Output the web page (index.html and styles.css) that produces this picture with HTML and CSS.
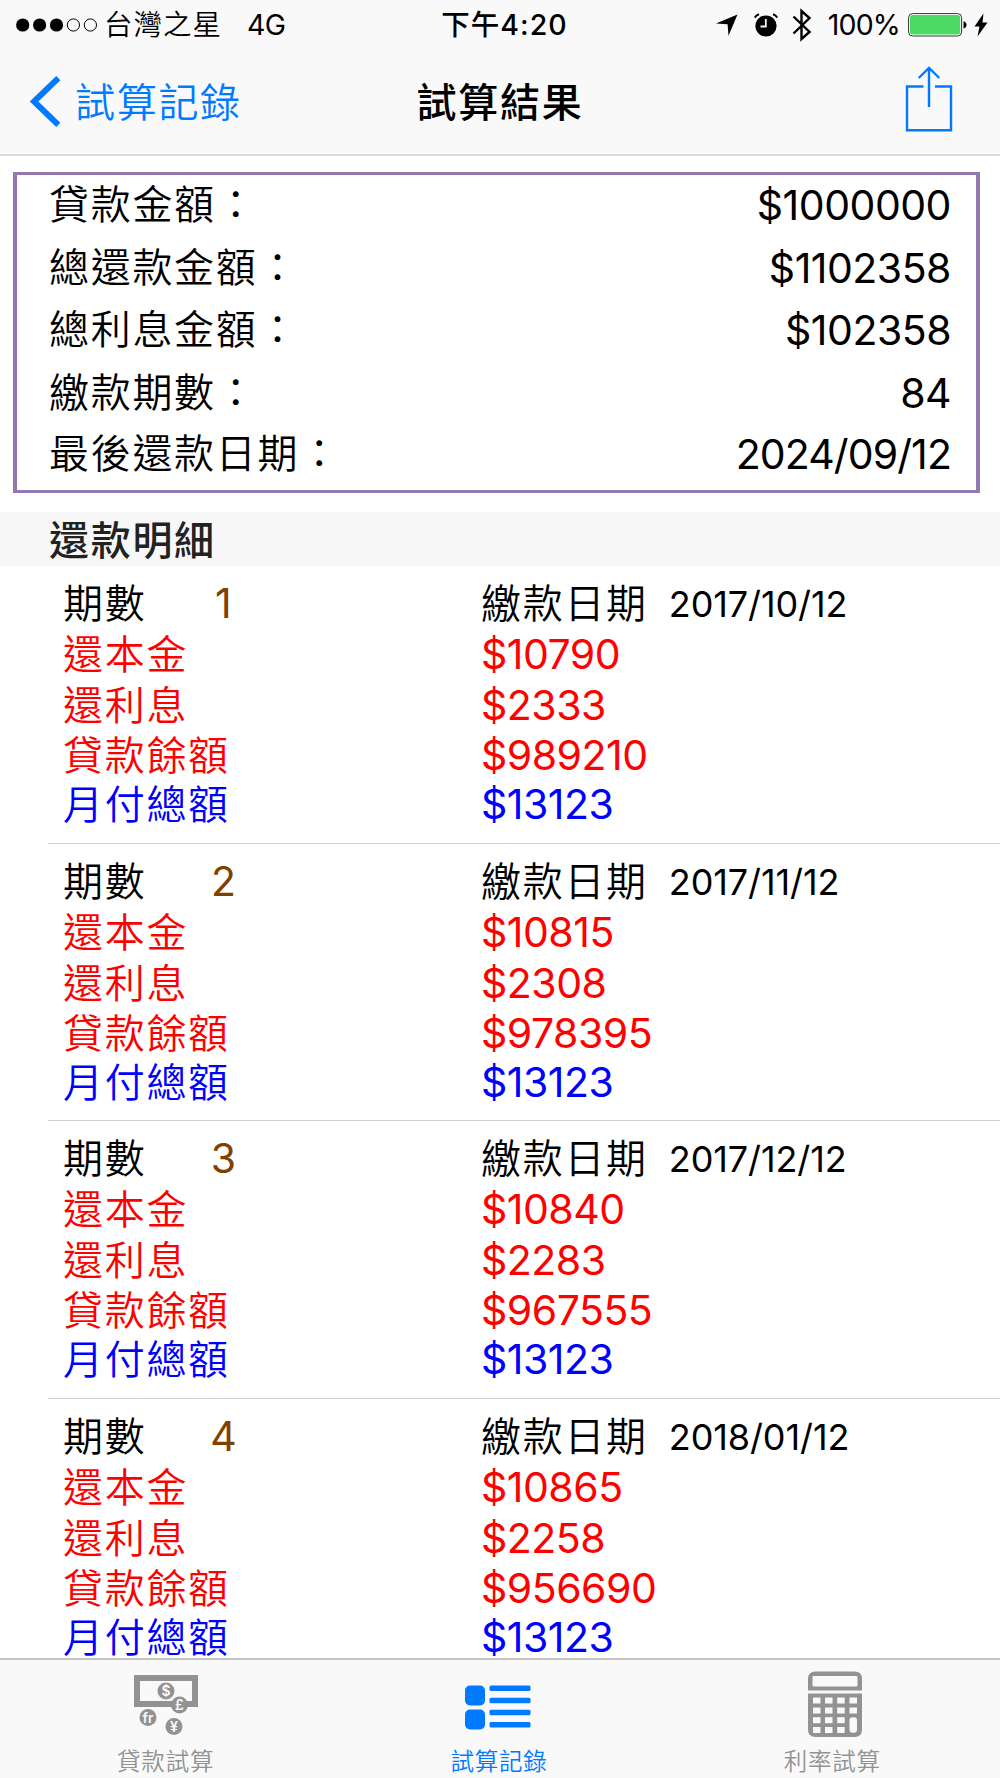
FILE: index.html
```html
<!DOCTYPE html>
<html lang="zh-Hant">
<head>
    <meta charset="UTF-8">
    <meta name="viewport" content="width=device-width, initial-scale=1.0">
    <title>試算結果</title>
    <link rel="stylesheet" href="styles.css">
</head>
<body>
    <header class="top">
        <div class="status">
            <div class="status-left">
                <svg class="signal" width="82" height="14" viewBox="0 0 82 14">
                    <circle cx="6.7" cy="7" r="6.6"/>
                    <circle cx="23.6" cy="7" r="6.6"/>
                    <circle cx="40.5" cy="7" r="6.6"/>
                    <circle class="empty" cx="57.4" cy="7" r="6.1"/>
                    <circle class="empty" cx="74.4" cy="7" r="6.1"/>
                </svg>
                <span class="carrier">台灣之星</span>
                <span class="network">4G</span>
            </div>
            <div class="time">下午4:20</div>
            <div class="status-right">
                <svg class="location" width="22" height="22" viewBox="0 0 22 22"><path d="M21.5 .5 0 9.6l11.6.6.9 11.6z"/></svg>
                <svg class="alarm" width="24" height="24" viewBox="0 0 24 24">
                    <circle cx="12" cy="13" r="10.6"/>
                    <path d="M.8 4.6A7 7 0 0 1 5 1.2M23.2 4.6A7 7 0 0 0 19 1.2" fill="none" stroke="#000" stroke-width="2"/>
                    <path d="M11.8 6v7.5H6.5" fill="none" stroke="#f9f9f9" stroke-width="1.8"/>
                </svg>
                <svg class="bluetooth" width="20" height="34" viewBox="0 0 20 34"><path d="M1.500 8.500 17.500 24 9.500 31V3l8 7L1.500 25.500"/></svg>
                <span class="percent">100%</span>
                <svg class="battery" width="60" height="24" viewBox="0 0 60 24">
                    <rect x=".6" y=".6" width="53" height="22.4" rx="4" fill="#fff" stroke="#333" stroke-width="1"/>
                    <rect x="2" y="2" width="50.2" height="19.6" rx="2.5" fill="#4cd964"/>
                    <path d="M55.5 8.2q3 1 3 3.7t-3 3.7z"/>
                </svg>
                <svg class="bolt" width="14" height="24" viewBox="0 0 14 24"><path d="M9.5.5.5 13.5h5L3.5 23.5 13.5 9.5h-5z"/></svg>
            </div>
        </div>
        <nav class="nav">
            <a class="back">
                <svg width="31" height="51" viewBox="0 0 31 51"><path d="M28.3 2.2 4 25.5 28.3 48.8"/></svg>
                <span>試算記錄</span>
            </a>
            <h1>試算結果</h1>
            <a class="share">
                <svg width="48" height="67" viewBox="0 0 48 67">
                    <path d="M18.5 20.5H2v43.8h44V20.5H30"/>
                    <path d="M24 41V2M13.7 12 24 2l10.3 10"/>
                </svg>
            </a>
        </nav>
    </header>

    <main>
        <dl class="summary">
            <dt>貸款金額：</dt><dd>$1000000</dd>
            <dt>總還款金額：</dt><dd>$1102358</dd>
            <dt>總利息金額：</dt><dd>$102358</dd>
            <dt>繳款期數：</dt><dd>84</dd>
            <dt>最後還款日期：</dt><dd class="last-date">2024/09/12</dd>
        </dl>

        <h2>還款明細</h2>

        <ul class="periods">
            <li>
                <div class="term">期數<span class="no">1</span></div>
                <div class="due">繳款日期<span class="date">2017/10/12</span></div>
                <div class="red">還本金</div><div class="red amount">$10790</div>
                <div class="red">還利息</div><div class="red amount">$2333</div>
                <div class="red">貸款餘額</div><div class="red amount">$989210</div>
                <div class="blue">月付總額</div><div class="blue amount">$13123</div>
            </li>
            <li>
                <div class="term">期數<span class="no">2</span></div>
                <div class="due">繳款日期<span class="date">2017/11/12</span></div>
                <div class="red">還本金</div><div class="red amount">$10815</div>
                <div class="red">還利息</div><div class="red amount">$2308</div>
                <div class="red">貸款餘額</div><div class="red amount">$978395</div>
                <div class="blue">月付總額</div><div class="blue amount">$13123</div>
            </li>
            <li>
                <div class="term">期數<span class="no">3</span></div>
                <div class="due">繳款日期<span class="date">2017/12/12</span></div>
                <div class="red">還本金</div><div class="red amount">$10840</div>
                <div class="red">還利息</div><div class="red amount">$2283</div>
                <div class="red">貸款餘額</div><div class="red amount">$967555</div>
                <div class="blue">月付總額</div><div class="blue amount">$13123</div>
            </li>
            <li>
                <div class="term">期數<span class="no">4</span></div>
                <div class="due">繳款日期<span class="date">2018/01/12</span></div>
                <div class="red">還本金</div><div class="red amount">$10865</div>
                <div class="red">還利息</div><div class="red amount">$2258</div>
                <div class="red">貸款餘額</div><div class="red amount">$956690</div>
                <div class="blue">月付總額</div><div class="blue amount">$13123</div>
            </li>
        </ul>
    </main>

    <footer class="tabs">
        <a class="tab">
            <svg width="66" height="68" viewBox="0 0 66 68">
                <rect x="4" y="8" width="58" height="26" fill="none" stroke="#929292" stroke-width="6"/>
                <circle cx="33" cy="21" r="8.5"/>
                <circle cx="46.5" cy="35" r="8.5"/>
                <circle cx="15" cy="47.5" r="8.5"/>
                <circle cx="41" cy="56.5" r="8.5"/>
                <g class="coin">
                    <text x="33" y="26">$</text>
                    <text x="46.5" y="40">£</text>
                    <text x="15" y="52.5">fr</text>
                    <text x="41" y="61.5">¥</text>
                </g>
            </svg>
            <span>貸款試算</span>
        </a>
        <a class="tab active">
            <svg width="66" height="68" viewBox="0 0 66 68">
                <rect x="0" y="15.5" width="20" height="20" rx="5"/>
                <rect x="0" y="39.5" width="20" height="20" rx="5"/>
                <rect x="24.5" y="15.5" width="41" height="5.5" rx="1.5"/>
                <rect x="24.5" y="27.7" width="41" height="5.5" rx="1.5"/>
                <rect x="24.5" y="39.8" width="41" height="5.5" rx="1.5"/>
                <rect x="24.5" y="52" width="41" height="5.5" rx="1.5"/>
            </svg>
            <span>試算記錄</span>
        </a>
        <a class="tab calculator">
            <svg width="54" height="68" viewBox="0 0 54 68">
                <path d="M0 20.5V9q0-7.5 7.5-7.5h39q7.5 0 7.5 7.5v11.5z"/>
                <path d="M0 23.5h54v36q0 7.5-7.500 7.500h-39Q0 67 0 59.500z"/>
                <g fill="#f9f9f9">
                    <rect x="4.5" y="6" width="45" height="10.5" rx="1"/>
                    <rect x="5" y="27.5" width="7.5" height="6"/><rect x="17" y="27.5" width="7.5" height="6"/><rect x="29.2" y="27.5" width="7.5" height="6"/><rect x="41.5" y="27.5" width="7.5" height="6"/>
                    <rect x="5" y="37.5" width="7.5" height="6"/><rect x="17" y="37.5" width="7.5" height="6"/><rect x="29.2" y="37.5" width="7.5" height="6"/><rect x="41.5" y="37.5" width="7.5" height="6"/>
                    <rect x="5" y="47.2" width="7.5" height="6"/><rect x="17" y="47.2" width="7.5" height="6"/><rect x="29.2" y="47.2" width="7.5" height="6"/>
                    <rect x="5" y="57" width="7.5" height="6"/><rect x="17" y="57" width="7.5" height="6"/><rect x="29.2" y="57" width="7.5" height="6"/>
                    <rect x="41.5" y="47.2" width="7.5" height="15.5" rx="3"/>
                </g>
            </svg>
            <span>利率試算</span>
        </a>
    </footer>
</body>
</html>
```
FILE: styles.css
```css
* {
    box-sizing: border-box;
    margin: 0;
    padding: 0;
}

body {
    display: flex;
    flex-direction: column;
    height: 1778px;
    overflow: hidden;
    background: #fff;
    color: #000;
    font-family: Inter, "Noto Sans CJK TC", sans-serif;
    font-size: 40px;
    font-weight: 350;
    letter-spacing: 1.7px;
    white-space: nowrap;
}

/* Barra superior */
.top {
    height: 156px;
    background: #f9f9f9;
    border-bottom: 2px solid #dbdbdb;
}

.status {
    display: grid;
    grid-template-columns: 1fr auto 1fr;
    height: 50px;
    padding: 0 12px 0 16px;
    font-size: 28.5px;
    line-height: 50px;
    letter-spacing: 1px;
}

.status-left,
.status-right {
    display: flex;
    align-items: center;
}

.status-right {
    justify-content: flex-end;
}

.signal .empty {
    fill: none;
    stroke: #000;
    stroke-width: 1;
}

.carrier {
    margin-left: 6px;
}

.network {
    margin-left: 25px;
    font-weight: 400;
    letter-spacing: -0.7px;
}

.time {
    padding-left: 5px;
    font-weight: 500;
}

.alarm {
    margin-left: 16px;
}

.bluetooth {
    margin-left: 14px;
    fill: none;
    stroke: #000;
    stroke-width: 2.4;
}

.percent {
    margin: 0 8px 0 16px;
    font-weight: 400;
    letter-spacing: -0.8px;
}

.bolt {
    margin-left: 6px;
}

.nav {
    display: grid;
    grid-template-columns: 1fr auto 1fr;
    align-items: center;
    height: 102px;
    padding: 0 47px 0 30px;
}

.back {
    display: flex;
    align-items: center;
    gap: 14px;
    color: #007aff;
}

.back span {
    padding-bottom: 3px;
}

.back svg,
.share svg {
    fill: none;
    stroke: #007aff;
}

.back svg {
    stroke-width: 6;
}

.share {
    display: flex;
    justify-content: flex-end;
    padding-bottom: 4px;
}

.share svg {
    stroke-width: 2.4;
}

h1 {
    padding: 0 0 3px 17px;
    font-size: 40px;
    font-weight: 500;
}

main {
    flex: 1;
    overflow: hidden;
}

/* Resumen */
.summary {
    display: grid;
    grid-template-columns: auto 1fr;
    grid-template-rows: 62.7px 62.7px 62.7px 61px 60px;
    height: 321px;
    margin: 16px 20px 19px 13px;
    padding-left: 32px;
    padding-right: 25px;
    border: solid #9479b0;
    border-width: 3px 4px;
    line-height: 60px;
}

.summary dd {
    text-align: right;
    font-size: 41px;
    font-weight: 400;
    letter-spacing: -0.5px;
}

.summary .last-date {
    letter-spacing: -0.9px;
}

h2 {
    height: 54px;
    padding-left: 49px;
    background: #f7f7f7;
    color: #222;
    font-size: 40px;
    font-weight: 500;
    line-height: 57px;
}

/* Cuotas */
.periods {
    list-style: none;
}

.periods li {
    display: grid;
    grid-template-columns: 418px 1fr;
    grid-template-rows: 51px 51px 50px 49px 49px;
    height: 277.7px;
    margin-left: 48px;
    padding: 13px 0 0 15px;
    border-bottom: 1.5px solid #d0d0d2;
    line-height: 50px;
}

.term {
    display: flex;
}

.no {
    width: 80px;
    margin-left: 37px;
    text-align: center;
    color: #804000;
    font-size: 41px;
    font-weight: 400;
    letter-spacing: 0;
    line-height: 49px;
}

.due {
    display: flex;
}

.date {
    margin-left: 21px;
    font-size: 36px;
    font-weight: 400;
    letter-spacing: -0.1px;
}

.red {
    color: #f00;
}

.blue {
    color: #00f;
}

.amount {
    font-size: 41px;
    font-weight: 400;
    letter-spacing: -0.5px;
    line-height: 48px;
}

/* Pestañas */
.tabs {
    display: grid;
    grid-template-columns: repeat(3, 1fr);
    height: 120px;
    border-top: 2px solid #c4c4c4;
    background: #f9f9f9;
}

.tab {
    display: flex;
    flex-direction: column;
    align-items: center;
    padding: 10px 2px 0 0;
    color: #929292;
    fill: #929292;
    font-size: 23.5px;
    line-height: 47px;
    letter-spacing: 0.8px;
}

.tab.active {
    color: #007aff;
    fill: #007aff;
}

.active svg {
    margin-right: 2px;
}

.calculator svg {
    margin-left: 5px;
}

.coin {
    fill: #f9f9f9;
    font-size: 14px;
    font-weight: 600;
    letter-spacing: 0;
    text-anchor: middle;
}
```
